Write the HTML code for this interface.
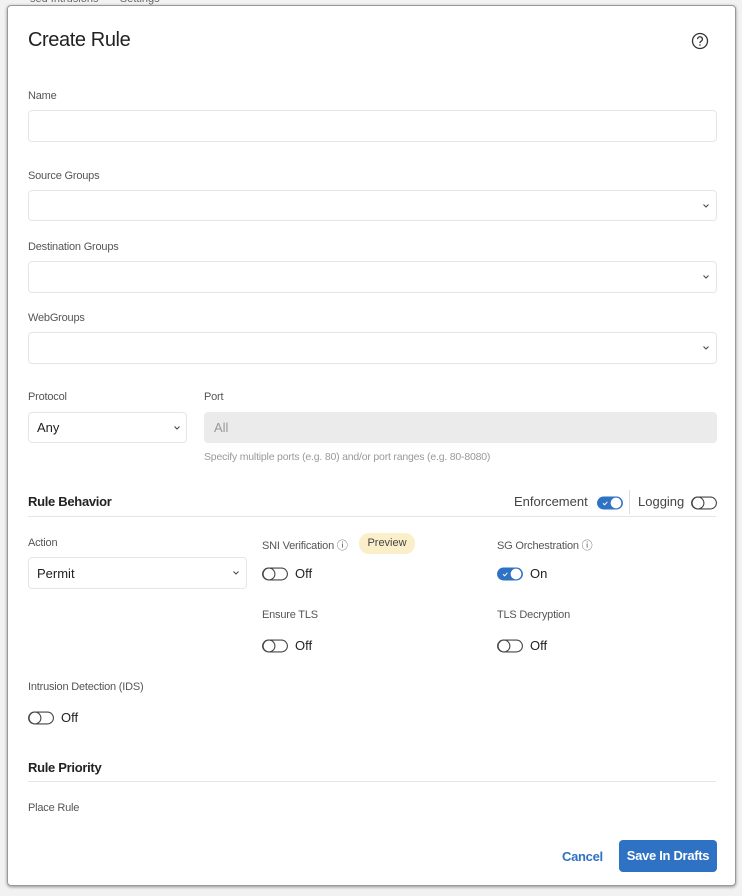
<!DOCTYPE html>
<html><head><style>
*{box-sizing:border-box;margin:0;padding:0}
body{width:742px;height:896px;background:#f2f2f2;position:relative;overflow:hidden;font-family:"Liberation Sans",sans-serif;color:#222}
.modal{position:absolute;left:7px;top:5px;width:729px;height:881px;background:#fff;border:1px solid #999;border-radius:4px;box-shadow:0 1px 3px rgba(0,0,0,.4)}
.a{position:absolute}
.lbl{position:absolute;font-size:11px;color:#555;letter-spacing:-.2px}
.box{position:absolute;border:1px solid #e6e6e6;border-radius:4px;background:#fff}
.chev{position:absolute}
.tv{position:absolute;font-size:13px;color:#222}
.h{position:absolute;font-size:13px;font-weight:bold;color:#222;letter-spacing:-.3px}
.line{position:absolute;left:28px;width:688px;height:1px;background:#e6e6e6}
</style></head><body>
<svg width="0" height="0" style="position:absolute">
<defs>
<symbol id="off" viewBox="0 0 26 14"><rect x="0.6" y="1.1" width="24.8" height="11.8" rx="5.9" fill="#fff" stroke="#444" stroke-width="1.1"/><circle cx="7" cy="7" r="5.9" fill="#fff" stroke="#444" stroke-width="1.1"/></symbol>
<symbol id="on" viewBox="0 0 26 14"><rect x="0.6" y="1.1" width="24.8" height="11.8" rx="5.9" fill="#2f72c4" stroke="#2f72c4" stroke-width="1.1"/><path d="M6 7.3l1.6 1.5 2.8-3" fill="none" stroke="#fff" stroke-width="1"/><circle cx="19" cy="7" r="5.9" fill="#fff" stroke="#2f72c4" stroke-width="1.1"/></symbol>
<symbol id="ch" viewBox="0 0 8 6"><path d="M1.5 1.5l2.5 2.5 2.5-2.5" fill="none" stroke="#444" stroke-width="1"/></symbol>
</defs></svg>
<div class="a" style="left:30px;top:-7px;font-size:11px;color:#666">sed Intrusions &nbsp;&nbsp;&nbsp;&nbsp;&nbsp;&nbsp;Settings</div>
<div class="modal"></div>
<div class="a" style="left:28px;top:29px;font-size:20px;color:#222;letter-spacing:-.4px">Create Rule</div>
<svg class="a" style="left:691px;top:32px" width="18" height="18" viewBox="0 0 18 18"><circle cx="9" cy="9" r="7.5" fill="none" stroke="#333" stroke-width="1.3"/><path d="M6.6 7.2a2.4 2.4 0 1 1 3.2 2.2c-.6.3-.8.7-.8 1.3v.4" fill="none" stroke="#333" stroke-width="1.3"/><circle cx="9" cy="13" r=".8" fill="#333"/></svg>

<div class="lbl" style="left:28px;top:90px">Name</div>
<div class="box" style="left:28px;top:110px;width:689px;height:32px"></div>
<div class="lbl" style="left:28px;top:170px">Source Groups</div>
<div class="box" style="left:28px;top:190px;width:689px;height:31px"></div><svg class="chev" style="left:702px;top:203px" width="8" height="6"><use href="#ch"/></svg>
<div class="lbl" style="left:28px;top:241px">Destination Groups</div>
<div class="box" style="left:28px;top:261px;width:689px;height:32px"></div><svg class="chev" style="left:702px;top:274px" width="8" height="6"><use href="#ch"/></svg>
<div class="lbl" style="left:28px;top:312px">WebGroups</div>
<div class="box" style="left:28px;top:332px;width:689px;height:32px"></div><svg class="chev" style="left:702px;top:345px" width="8" height="6"><use href="#ch"/></svg>

<div class="lbl" style="left:28px;top:391px">Protocol</div>
<div class="box" style="left:28px;top:412px;width:159px;height:31px"></div>
<div class="tv" style="left:37px;top:420px">Any</div><svg class="chev" style="left:173px;top:425px" width="8" height="6"><use href="#ch"/></svg>
<div class="lbl" style="left:204px;top:391px">Port</div>
<div class="a" style="left:204px;top:412px;width:513px;height:31px;background:#ebebeb;border-radius:4px"></div>
<div class="tv" style="left:214px;top:420px;color:#999">All</div>
<div class="lbl" style="left:204px;top:451px;color:#999;font-size:10.5px">Specify multiple ports (e.g. 80) and/or port ranges (e.g. 80-8080)</div>

<div class="h" style="left:28px;top:494px">Rule Behavior</div>
<div class="tv" style="left:514px;top:494px;color:#444">Enforcement</div>
<svg class="a" style="left:597px;top:496px" width="26" height="14"><use href="#on"/></svg>
<div class="a" style="left:629px;top:490px;width:1px;height:24px;background:#ddd"></div>
<div class="tv" style="left:638px;top:494px;color:#444">Logging</div>
<svg class="a" style="left:691px;top:496px" width="26" height="14"><use href="#off"/></svg>
<div class="line" style="top:516px"></div>

<div class="lbl" style="left:28px;top:537px">Action</div>
<div class="box" style="left:28px;top:557px;width:219px;height:32px"></div>
<div class="tv" style="left:37px;top:566px">Permit</div><svg class="chev" style="left:232px;top:570px" width="8" height="6"><use href="#ch"/></svg>

<div class="lbl" style="left:262px;top:537px">SNI Verification &#9432;</div>
<div class="a" style="left:359px;top:533px;width:56px;height:21px;background:#fbefc9;border-radius:10px;font-size:11px;color:#444;text-align:center;line-height:21px">Preview</div>
<svg class="a" style="left:262px;top:567px" width="26" height="14"><use href="#off"/></svg><div class="tv" style="left:295px;top:566px">Off</div>

<div class="lbl" style="left:497px;top:537px">SG Orchestration &#9432;</div>
<svg class="a" style="left:497px;top:567px" width="26" height="14"><use href="#on"/></svg><div class="tv" style="left:530px;top:566px">On</div>

<div class="lbl" style="left:262px;top:609px">Ensure TLS</div>
<svg class="a" style="left:262px;top:639px" width="26" height="14"><use href="#off"/></svg><div class="tv" style="left:295px;top:638px">Off</div>
<div class="lbl" style="left:497px;top:609px">TLS Decryption</div>
<svg class="a" style="left:497px;top:639px" width="26" height="14"><use href="#off"/></svg><div class="tv" style="left:530px;top:638px">Off</div>

<div class="lbl" style="left:28px;top:681px">Intrusion Detection (IDS)</div>
<svg class="a" style="left:28px;top:711px" width="26" height="14"><use href="#off"/></svg><div class="tv" style="left:61px;top:710px">Off</div>

<div class="h" style="left:28px;top:760px">Rule Priority</div>
<div class="line" style="top:781px"></div>
<div class="lbl" style="left:28px;top:802px">Place Rule</div>

<div class="a" style="left:562px;top:849px;font-size:13px;font-weight:bold;color:#2f72c4;letter-spacing:-.3px">Cancel</div>
<div class="a" style="left:619px;top:840px;width:98px;height:32px;background:#2f72c4;border-radius:4px;color:#fff;font-size:13px;font-weight:bold;text-align:center;line-height:32px;letter-spacing:-.3px">Save In Drafts</div>
</body></html>
